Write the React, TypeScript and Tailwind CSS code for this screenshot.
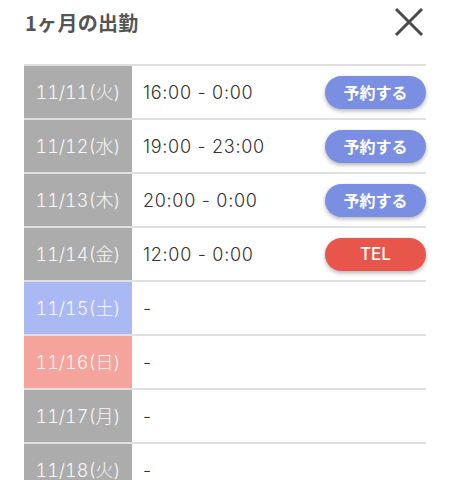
import React from "react";

type Row = { date: string; kind: "gray" | "blue" | "pink"; time: string; btn?: "reserve" | "tel" };

const rows: Row[] = [
  { date: "11/11(火)", kind: "gray", time: "16:00 - 0:00", btn: "reserve" },
  { date: "11/12(水)", kind: "gray", time: "19:00 - 23:00", btn: "reserve" },
  { date: "11/13(木)", kind: "gray", time: "20:00 - 0:00", btn: "reserve" },
  { date: "11/14(金)", kind: "gray", time: "12:00 - 0:00", btn: "tel" },
  { date: "11/15(土)", kind: "blue", time: "-" },
  { date: "11/16(日)", kind: "pink", time: "-" },
  { date: "11/17(月)", kind: "gray", time: "-" },
  { date: "11/18(火)", kind: "gray", time: "-" },
];

const bgMap = {
  gray: "bg-[#acacac]",
  blue: "bg-[#aab9f3]",
  pink: "bg-[#f4a49d]",
};

const latin = { fontFamily: 'Inter, "Noto Sans CJK JP", sans-serif' };

export default function App() {
  return (
    <div
      className="w-[450px] h-[480px] bg-white overflow-hidden"
      style={{ fontFamily: '"Noto Sans CJK JP", "Noto Sans", sans-serif' }}
    >
      <div className="flex items-center justify-between pl-[25px] pr-[26px] h-[46px]">
        <h1 className="text-[20px] font-bold text-[#555] leading-none tracking-[0.3px]">1ヶ月の出勤</h1>
        <svg width="30" height="30" viewBox="0 0 30 30" className="mt-[-2px]">
          <path d="M2 2 L28 28 M28 2 L2 28" stroke="#4a4a4a" strokeWidth="3" />
        </svg>
      </div>
      <div className="mt-[18px] mx-6 border-t-2 border-[#e0e0e0]">
        {rows.map((r) => (
          <div key={r.date} className="flex h-[54px] border-b-2 border-[#e0e0e0]">
            <div
              className={`w-[109px] shrink-0 flex items-center justify-center border-r border-white text-[18px] font-light tabular-nums text-[#f7f7f7] ${bgMap[r.kind]}`}
              style={latin}
            >
              {r.date}
            </div>
            <div className="flex-1 flex items-center justify-between pl-[10px]">
              <span className="text-[18px] font-light tracking-[0.7px] text-[#333]" style={latin}>
                {r.time}
              </span>
              {r.btn === "reserve" && (
                <button className="w-[101px] h-[33px] rounded-full bg-[#7b8fe2] text-white text-[16px] font-bold shadow-[0_2px_4px_rgba(0,0,0,0.3)] leading-none">
                  予約する
                </button>
              )}
              {r.btn === "tel" && (
                <button
                  className="w-[101px] h-[33px] rounded-full bg-[#e8564b] text-white text-[17px] font-medium shadow-[0_2px_4px_rgba(0,0,0,0.3)] leading-none"
                  style={latin}
                >
                  TEL
                </button>
              )}
            </div>
          </div>
        ))}
      </div>
    </div>
  );
}
